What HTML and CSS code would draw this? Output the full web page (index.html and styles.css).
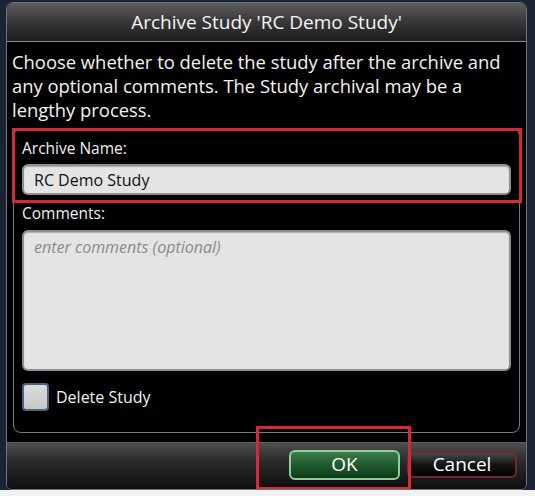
FILE: index.html
```html
<!DOCTYPE html>
<html lang="en">
<head>
  <meta charset="UTF-8" />
  <meta name="viewport" content="width=device-width, initial-scale=1.0"/>
  <title>Archive Study</title>
  <link rel="stylesheet" href="styles.css">
</head>
<body>

  <div class="screen">
    <div class="dialog">
      <div class="titlebar">Archive Study 'RC Demo Study'</div>

      <div class="content">
        <p class="intro">Choose whether to delete the study after the archive and<br>any optional comments. The Study archival may be a<br>lengthy process.</p>

        <div class="panel">
          <div class="highlight">
            <label class="field-label" for="archive-name">Archive Name:</label>
            <input id="archive-name" class="textbox" type="text" value="RC Demo Study" />
          </div>

          <label class="field-label comments-label" for="comments">Comments:</label>
          <textarea id="comments" class="textbox comments" placeholder="enter comments (optional)"></textarea>

          <label class="check-row">
            <span class="checkbox"></span>
            <span>Delete Study</span>
          </label>
        </div>
      </div>

      <div class="footer">
        <div class="ok-wrap">
          <button class="btn btn-ok">OK</button>
          <span class="marker"></span>
        </div>
        <button class="btn btn-cancel">Cancel</button>
      </div>
    </div>
  </div>

</body>
</html>
```

FILE: styles.css
```css
* {
  box-sizing: border-box;
  margin: 0;
  padding: 0;
}

body {
  font-family: 'Open Sans', 'Liberation Sans', sans-serif;
  background: #f2f2f2;
  color: #f2f2f2;
}

.screen {
  height: 490px;
  background: #1b2231;
  padding: 2px 8px 0 6px;
}

.dialog {
  height: 488px;
  display: flex;
  flex-direction: column;
  background: #000;
  border: 1px solid #6f7580;
  border-radius: 7px 7px 6px 6px;
  overflow: hidden;
}

.titlebar {
  height: 39px;
  flex-shrink: 0;
  display: flex;
  align-items: center;
  justify-content: center;
  font-size: 19px;
  color: #f4f4f4;
  background: linear-gradient(#5e5e5e, #3a3a3a 45%, #1c1c1c);
  border-bottom: 1px solid #8c8c8c;
}

.content {
  flex: 1;
  padding: 8px 6px 0 6px;
}

.intro {
  font-size: 18.4px;
  line-height: 24px;
  margin: 0 0 6px -1px;
}

.panel {
  border: 1px solid #7c7c7c;
  border-radius: 8px;
  padding: 0 8px 21px 8px;
}

.highlight {
  margin: -1px -11px 0 -10px;
  border: 3px solid #d42a35;
  padding: 8px 8px 5px 7px;
}

.field-label {
  display: block;
  font-size: 15.5px;
  line-height: 19px;
  color: #f0f0f0;
}

.comments-label {
  margin-top: 1px;
}

.textbox {
  display: block;
  width: 100%;
  margin-top: 6px;
  height: 31px;
  padding: 0 10px;
  font-family: inherit;
  font-size: 16px;
  color: #111;
  background: #e4e4e4;
  border: 2px solid #8e8e8e;
  border-radius: 6px;
  box-shadow: inset 0 1px 1px rgba(0, 0, 0, 0.25);
  outline: none;
}

.comments {
  height: 141px;
  margin-top: 7px;
  padding: 4px 10px;
  font-size: 16px;
  resize: none;
}

.comments::placeholder {
  color: #8a8a8a;
  font-style: italic;
}

.check-row {
  display: flex;
  align-items: center;
  gap: 7px;
  margin-top: 12px;
  height: 28px;
  font-size: 16px;
}

.checkbox {
  width: 27px;
  height: 28px;
  border: 2px solid #4b6482;
  border-radius: 4px;
  background: linear-gradient(#dcdcdc, #c8c8c8);
}

.footer {
  height: 47px;
  flex-shrink: 0;
  display: flex;
  justify-content: flex-end;
  align-items: center;
  gap: 7px;
  padding: 0 9px 3px 0;
  background: linear-gradient(#4e4e4e, #2a2a2a 40%, #0e0e0e);
  border-top: 1px solid #5c5c5c;
}

.ok-wrap {
  position: relative;
}

.btn {
  display: block;
  font-family: inherit;
  font-size: 19px;
  line-height: 1;
  color: #fff;
  border-radius: 6px;
  cursor: pointer;
}

.btn-ok {
  width: 111px;
  height: 30px;
  border: 2px solid #8ccf98;
  background: linear-gradient(#3f7d4c, #1f5a2c 50%, #0d3a18);
}

.btn-cancel {
  width: 110px;
  height: 27px;
  border: 2px solid #6e2a2e;
  background: linear-gradient(#484848, #151515 50%, #000);
}

.marker {
  position: absolute;
  left: -33px;
  right: -11px;
  top: -24px;
  bottom: -10px;
  border: 3px solid #d42a35;
  pointer-events: none;
}
```
